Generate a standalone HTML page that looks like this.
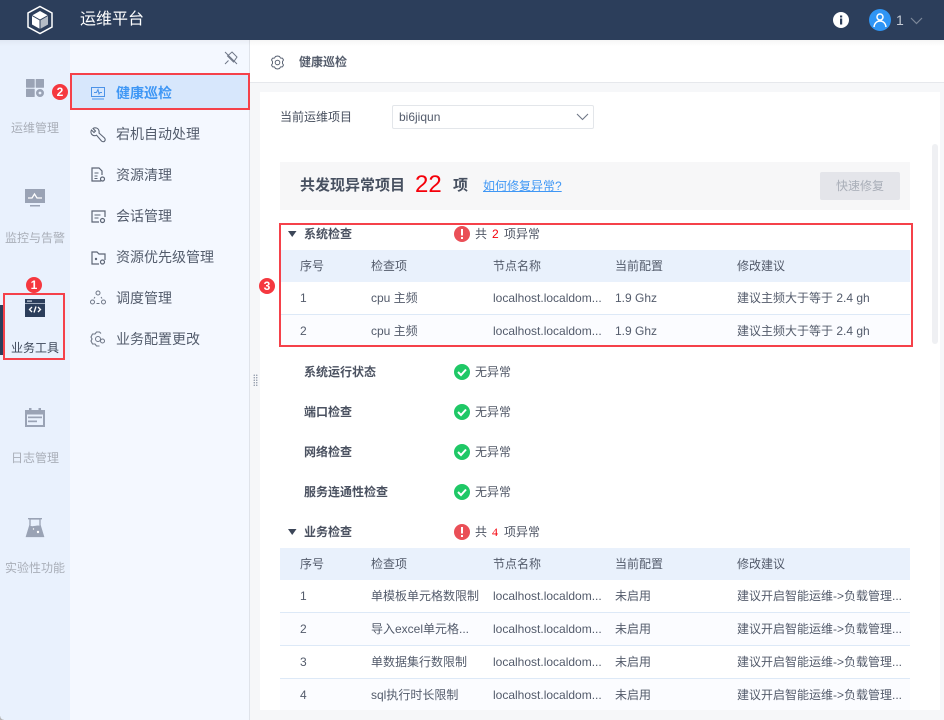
<!DOCTYPE html>
<html lang="zh"><head><meta charset="utf-8"><style>
*{box-sizing:border-box}
html,body{margin:0;padding:0;width:944px;height:720px;overflow:hidden;background:#f6f7f9;font-family:"Liberation Sans","Noto Sans CJK SC",sans-serif;font-size:12px;color:#4a5568}
.a{position:absolute;white-space:nowrap}
svg{position:absolute;overflow:visible}
.rl{left:0;width:70px;text-align:center;font-size:12px;color:#a9aeb8;line-height:16px}
.ml{left:116px;font-size:14px;color:#535c6c;line-height:20px}
.sec{left:304px;font-weight:bold;color:#4a5160;line-height:16px}
.st{left:475px;color:#4f5665;line-height:16px}
.th{height:32px;left:280px;width:630px;background:#e9f1fc}
.rw{left:280px;width:630px;height:33px;border-bottom:1px solid #dde9f7}
.t{line-height:16px;color:#535b6b}
.badge{width:16px;height:16px;border-radius:50%;background:#f5383f;color:#fff;text-align:center;font-size:12px;font-weight:bold;line-height:16px}
</style></head><body>
<div class="a" style="left:0;top:0;width:944px;height:40px;background:#2c3e5b"></div>
<svg style="left:27px;top:5px" width="26" height="30" viewBox="0 0 26 30"><path d="M13 1.500 25 8v14l-12 6.500L1 22V8z" fill="none" stroke="#fff" stroke-width="1.500"/><path d="M13 6 21 10.500v9L13 24l-8-4.500v-9z" fill="#fff"/><path d="M13 15v9l8-4.500v-9z" fill="#2c3e5b" opacity=".35"/><path d="M5 10.500 13 15l8-4.500M13 15v9" stroke="#2c3e5b" fill="none" stroke-width="1"/></svg>
<div class="a" style="left:80px;top:9px;font-size:16px;line-height:22px;color:#fff">运维平台</div>
<svg style="left:833px;top:12px" width="16" height="16"><circle cx="8" cy="8" r="8" fill="#fff"/><rect x="7" y="6.500" width="2.200" height="6" fill="#2c3e5b"/><rect x="7" y="3.500" width="2.200" height="2" fill="#2c3e5b"/></svg>
<svg style="left:869px;top:9px" width="22" height="22"><circle cx="11" cy="11" r="11" fill="#2f95f5"/><circle cx="11" cy="8" r="3" fill="none" stroke="#fff" stroke-width="1.500"/><path d="M5 18c.5-4 3-6 6-6s5.500 2 6 6" fill="none" stroke="#fff" stroke-width="1.500"/></svg>
<div class="a" style="left:896px;top:11px;font-size:14px;line-height:18px;color:#c5cbd5">1</div>
<svg style="left:910px;top:17px" width="13" height="8"><path d="M1 1l5.500 5.500L12 1" fill="none" stroke="#7c8799" stroke-width="1.200"/></svg>

<div class="a" style="left:0;top:40px;width:70px;height:680px;background:#e9f1fd"></div>
<div class="a" style="left:70px;top:40px;width:180px;height:680px;background:#f4f8ff;border-right:1px solid #dfe3ea"></div>
<div class="a" style="left:0;top:716px;width:4px;height:4px;background:radial-gradient(circle at 100% 0,#e9f1fd 3.500px,#b5b5b5 4px)"></div>
<div class="a" style="left:250px;top:40px;width:694px;height:42px;background:#fff"></div>
<div class="a" style="left:250px;top:82px;width:694px;height:1px;background:#e6e8ec"></div>
<div class="a" style="left:260px;top:92px;width:680px;height:628px;background:#fff"></div>
<div class="a" style="left:260px;top:710px;width:680px;height:10px;background:#f6f7f9"></div>
<div class="a" style="left:932px;top:144px;width:6px;height:200px;border-radius:3px;background:#eff0f3"></div>
<div class="a" style="left:0;top:40px;width:944px;height:6px;background:linear-gradient(#0000000a,#00000000)"></div>

<!-- rail -->
<svg style="left:26px;top:79px" width="18" height="18"><rect width="8.700" height="8.700" rx=".5" fill="#9aa3b5"/><rect x="9.700" width="8.300" height="8.700" rx=".5" fill="#9aa3b5"/><rect y="9.700" width="8.700" height="8.300" rx=".5" fill="#9aa3b5"/><circle cx="14" cy="14" r="2.700" fill="none" stroke="#9aa3b5" stroke-width="2.600"/></svg>
<div class="a rl" style="top:120px">运维管理</div>
<svg style="left:25px;top:189px" width="20" height="18"><rect width="20" height="14" fill="#9aa3b5"/><rect x="5" y="16" width="10" height="1.500" fill="#9aa3b5"/><path d="M3 9h4l2.500-4L12 9h5" fill="none" stroke="#fff" stroke-width="1.300"/></svg>
<div class="a rl" style="top:230px">监控与告警</div>
<div class="a" style="left:0;top:305px;width:3px;height:50px;background:#2c3e5b"></div>
<svg style="left:25px;top:299px" width="20" height="18"><rect width="20" height="18" fill="#2c3e5b"/><rect y="4" width="20" height=".7" fill="#cfd8e6"/><rect x="2" y="1.500" width="5" height="1.200" fill="#cfd8e6"/><path d="M7 8 4.500 10.500 7 13M13 8l2.500 2.500L13 13M11 7.500 9 13.500" fill="none" stroke="#fff" stroke-width="1.300"/></svg>
<div class="a rl" style="top:340px;color:#3c4658">业务工具</div>
<svg style="left:25px;top:408px" width="20" height="19"><path d="M0 2h20v17H0z" fill="#9aa3b5"/><rect x="4" width="2.500" height="4" fill="#9aa3b5"/><rect x="13.500" width="2.500" height="4" fill="#9aa3b5"/><rect x="2" y="6.500" width="16" height="10.500" fill="#e9f1fd"/><rect x="3" y="8.500" width="14" height="1.700" fill="#9aa3b5"/><rect x="3" y="12.500" width="9" height="1.700" fill="#9aa3b5"/></svg>
<div class="a rl" style="top:450px">日志管理</div>
<svg style="left:26px;top:518px" width="18" height="19"><path d="M2 .7h14M4 1v6L.5 18.500h17L14 7V1z" fill="none" stroke="#9aa3b5" stroke-width="1.300"/><path d="M3.500 7.500 0 19h18L14.500 8c-4-1.500-7 1.500-11-.5z" fill="#9aa3b5"/><circle cx="12" cy="14" r="1.200" fill="#fff"/><circle cx="7.500" cy="11" r=".7" fill="#fff"/></svg>
<div class="a rl" style="top:560px">实验性功能</div>

<!-- secondary menu -->
<svg style="left:224px;top:51px" width="14" height="14"><path d="M8 1 13 6 9.500 11 3.500 5zM1 1l12 12M1 13l3.500-3.500" fill="none" stroke="#6f7787" stroke-width="1"/></svg>
<div class="a" style="left:71px;top:75px;width:178px;height:34px;background:#d7e7fc"></div>
<svg style="left:91px;top:87px" width="14" height="13"><rect x=".5" y=".5" width="13" height="9" fill="none" stroke="#4c93e8"/><path d="M3 5.500h2.500l1.500-3 1 4.500 1-1.500h2" fill="none" stroke="#4c93e8"/><rect x="1" y="11.500" width="12" height="1" fill="#4c93e8"/></svg>
<div class="a ml" style="top:83px;color:#3f97f5;font-weight:bold">健康巡检</div>
<svg style="left:90px;top:127px" width="16" height="16"><path d="M6.500 1C4.500.5 3.500 1 3 1.500L5.500 4 4 5.500 1.500 3C.5 5 1 7 2.500 8 4 9 5.500 8.700 6.500 8.200L11.500 14c1 1 2.500 1 3.200 0 .8-1 .6-2-.2-3L9 6C9.500 4 8.500 1.500 6.500 1z" fill="none" stroke="#5d6676" stroke-width="1.100"/></svg>
<div class="a ml" style="top:124px">宕机自动处理</div>
<svg style="left:91px;top:167px" width="15" height="16"><path d="M10 14H1V1h7l3 3v4" fill="none" stroke="#5d6676" stroke-width="1.200"/><path d="M3.500 6h4M3.500 9h3M3.500 11.500h3" stroke="#5d6676"/><circle cx="11.500" cy="12" r="2" fill="none" stroke="#5d6676" stroke-width="1.200"/></svg>
<div class="a ml" style="top:165px">资源清理</div>
<svg style="left:91px;top:210px" width="15" height="14"><path d="M8 12H1V1h13v6" fill="none" stroke="#5d6676" stroke-width="1.200"/><path d="M3.500 5h6M3.500 8h4" stroke="#5d6676"/><circle cx="11.500" cy="10.500" r="2" fill="none" stroke="#5d6676" stroke-width="1.200"/></svg>
<div class="a ml" style="top:206px">会话管理</div>
<svg style="left:91px;top:251px" width="15" height="14"><path d="M8 13H1V1h5l2 2h6v6" fill="none" stroke="#5d6676" stroke-width="1.200"/><circle cx="5" cy="8" r="1.200" fill="#5d6676"/><circle cx="11.500" cy="11" r="2" fill="none" stroke="#5d6676" stroke-width="1.200"/></svg>
<div class="a ml" style="top:247px">资源优先级管理</div>
<svg style="left:90px;top:290px" width="16" height="15"><circle cx="8" cy="3" r="2" fill="none" stroke="#6f7787"/><circle cx="2.500" cy="12" r="2" fill="none" stroke="#6f7787"/><circle cx="13.500" cy="12" r="2" fill="none" stroke="#6f7787"/><path d="M6.500 13.500h3M5 7 4 8.500M11 7l1 1.500" stroke="#6f7787"/></svg>
<div class="a ml" style="top:288px">调度管理</div>
<svg style="left:90px;top:331px" width="16" height="16"><path d="M11 2.500 9.500 1h-3L5 3 2.500 3 1 6l1 2-1 2 1.500 3H5l1.500 2h3" fill="none" stroke="#6f7787" stroke-width="1.100"/><circle cx="8" cy="8" r="2.500" fill="none" stroke="#6f7787"/><circle cx="12.500" cy="10" r="2" fill="none" stroke="#6f7787"/></svg>
<div class="a ml" style="top:329px">业务配置更改</div>
<div class="a" style="left:253px;top:374px;width:5px;height:12px;background-image:radial-gradient(#8d96a6 .6px,transparent .8px);background-size:2.500px 2.500px"></div>

<!-- top bar -->
<svg style="left:270px;top:55px" width="15" height="15"><path d="M7.500 1 9.500 1.500 10.500 3l2 .2 1 1.800-1 1.500v2l1 1.500-1 1.800-2 .2-1 1.500-2 .5-2-.5-1-1.500-2-.2-1-1.800 1-1.500v-2l-1-1.500 1-1.800 2-.2 1-1.500z" fill="none" stroke="#5d6676" stroke-width="1"/><circle cx="7.500" cy="7.500" r="2.300" fill="none" stroke="#5d6676"/></svg>
<div class="a t" style="left:299px;top:54px;font-weight:bold;color:#555d6c">健康巡检</div>
<div class="a t" style="left:280px;top:109px;color:#474f5e">当前运维项目</div>
<div class="a" style="left:392px;top:105px;width:202px;height:24px;border:1px solid #e3e6ea;border-radius:2px;background:#fff"></div>
<div class="a t" style="left:399px;top:109px">bi6jiqun</div>
<svg style="left:576px;top:113px" width="13" height="8"><path d="M1 1l5.500 5.500L12 1" fill="none" stroke="#6f7787" stroke-width="1.100"/></svg>

<div class="a" style="left:280px;top:162px;width:630px;height:48px;background:#f7f7f8"></div>
<div class="a" style="left:300px;top:176px;font-size:15px;line-height:20px;font-weight:bold;color:#475060">共发现异常项目</div>
<div class="a" style="left:415px;top:170px;font-size:24px;line-height:30px;color:#f5000a">22</div>
<div class="a" style="left:453px;top:176px;font-size:15px;line-height:20px;font-weight:bold;color:#475060">项</div>
<div class="a" style="left:483px;top:178px;line-height:16px;color:#3f97f5;text-decoration:underline">如何修复异常?</div>
<div class="a" style="left:820px;top:172px;width:80px;height:28px;background:#e4e5ea;border-radius:2px;color:#a9aeb8;text-align:center;line-height:28px">快速修复</div>

<!-- section 1 -->
<svg style="left:288px;top:231px" width="9" height="7"><path d="M0 0h8.500L4.200 6z" fill="#3c4658"/></svg>
<div class="a sec" style="top:226px">系统检查</div>
<svg style="left:454px;top:226px" width="16" height="16"><circle cx="8" cy="8" r="8" fill="#ea4f57"/><rect x="7" y="3" width="2" height="6.500" fill="#fff"/><rect x="7" y="11" width="2" height="2" fill="#fff"/></svg>
<div class="a st" style="top:226px">共</div><div class="a st" style="left:492px;top:226px;color:#f5000a">2</div><div class="a st" style="left:504px;top:226px">项异常</div>
<div class="a th" style="top:250px"></div>
<div class="a t" style="left:300px;top:258px">序号</div><div class="a t" style="left:371px;top:258px">检查项</div><div class="a t" style="left:493px;top:258px">节点名称</div><div class="a t" style="left:615px;top:258px">当前配置</div><div class="a t" style="left:737px;top:258px">修改建议</div>
<div class="a rw" style="top:282px;background:#fff"></div>
<div class="a t" style="left:300px;top:290px">1</div><div class="a t" style="left:371px;top:290px">cpu 主频</div><div class="a t" style="left:493px;top:290px">localhost.localdom...</div><div class="a t" style="left:615px;top:290px">1.9 Ghz</div><div class="a t" style="left:737px;top:290px">建议主频大于等于 2.4 gh</div>
<div class="a" style="left:280px;top:315px;width:630px;height:31px;background:#fbfcff"></div>
<div class="a t" style="left:300px;top:323px">2</div><div class="a t" style="left:371px;top:323px">cpu 主频</div><div class="a t" style="left:493px;top:323px">localhost.localdom...</div><div class="a t" style="left:615px;top:323px">1.9 Ghz</div><div class="a t" style="left:737px;top:323px">建议主频大于等于 2.4 gh</div>

<!-- ok rows -->
<div class="a sec" style="top:364px">系统运行状态</div>
<svg style="left:454px;top:364px" width="16" height="16"><circle cx="8" cy="8" r="8" fill="#1fc866"/><path d="M4 8l3 3 5-5.500" fill="none" stroke="#fff" stroke-width="2"/></svg><div class="a st" style="top:364px">无异常</div>
<div class="a sec" style="top:404px">端口检查</div>
<svg style="left:454px;top:404px" width="16" height="16"><circle cx="8" cy="8" r="8" fill="#1fc866"/><path d="M4 8l3 3 5-5.500" fill="none" stroke="#fff" stroke-width="2"/></svg><div class="a st" style="top:404px">无异常</div>
<div class="a sec" style="top:444px">网络检查</div>
<svg style="left:454px;top:444px" width="16" height="16"><circle cx="8" cy="8" r="8" fill="#1fc866"/><path d="M4 8l3 3 5-5.500" fill="none" stroke="#fff" stroke-width="2"/></svg><div class="a st" style="top:444px">无异常</div>
<div class="a sec" style="top:484px">服务连通性检查</div>
<svg style="left:454px;top:484px" width="16" height="16"><circle cx="8" cy="8" r="8" fill="#1fc866"/><path d="M4 8l3 3 5-5.500" fill="none" stroke="#fff" stroke-width="2"/></svg><div class="a st" style="top:484px">无异常</div>

<!-- section 2 -->
<svg style="left:288px;top:529px" width="9" height="7"><path d="M0 0h8.500L4.200 6z" fill="#3c4658"/></svg>
<div class="a sec" style="top:524px">业务检查</div>
<svg style="left:454px;top:524px" width="16" height="16"><circle cx="8" cy="8" r="8" fill="#ea4f57"/><rect x="7" y="3" width="2" height="6.500" fill="#fff"/><rect x="7" y="11" width="2" height="2" fill="#fff"/></svg>
<div class="a st" style="top:524px">共</div><div class="a st" style="left:492px;top:524px;color:#f5000a;font-family:'Liberation Serif',serif">4</div><div class="a st" style="left:504px;top:524px">项异常</div>
<div class="a th" style="top:548px"></div>
<div class="a t" style="left:300px;top:556px">序号</div><div class="a t" style="left:371px;top:556px">检查项</div><div class="a t" style="left:493px;top:556px">节点名称</div><div class="a t" style="left:615px;top:556px">当前配置</div><div class="a t" style="left:737px;top:556px">修改建议</div>
<div class="a rw" style="top:580px"></div>
<div class="a t" style="left:300px;top:588px">1</div><div class="a t" style="left:371px;top:588px">单模板单元格数限制</div><div class="a t" style="left:493px;top:588px">localhost.localdom...</div><div class="a t" style="left:615px;top:588px">未启用</div><div class="a t" style="left:737px;top:588px">建议开启智能运维-&gt;负载管理...</div>
<div class="a rw" style="top:613px;background:#fbfcff"></div>
<div class="a t" style="left:300px;top:621px">2</div><div class="a t" style="left:371px;top:621px">导入excel单元格...</div><div class="a t" style="left:493px;top:621px">localhost.localdom...</div><div class="a t" style="left:615px;top:621px">未启用</div><div class="a t" style="left:737px;top:621px">建议开启智能运维-&gt;负载管理...</div>
<div class="a rw" style="top:646px"></div>
<div class="a t" style="left:300px;top:654px">3</div><div class="a t" style="left:371px;top:654px">单数据集行数限制</div><div class="a t" style="left:493px;top:654px">localhost.localdom...</div><div class="a t" style="left:615px;top:654px">未启用</div><div class="a t" style="left:737px;top:654px">建议开启智能运维-&gt;负载管理...</div>
<div class="a" style="left:280px;top:679px;width:630px;height:31px;background:#fbfcff"></div>
<div class="a t" style="left:300px;top:687px">4</div><div class="a t" style="left:371px;top:687px">sql执行时长限制</div><div class="a t" style="left:493px;top:687px">localhost.localdom...</div><div class="a t" style="left:615px;top:687px">未启用</div><div class="a t" style="left:737px;top:687px">建议开启智能运维-&gt;负载管理...</div>

<!-- annotations -->
<div class="a" style="left:70px;top:73px;width:180px;height:37px;border:2px solid #f5414a"></div>
<div class="a" style="left:3px;top:293px;width:62px;height:67px;border:2px solid #f5414a"></div>
<div class="a" style="left:279px;top:223px;width:634px;height:124px;border:2px solid #f5414a"></div>
<div class="a badge" style="left:26px;top:277px">1</div>
<div class="a badge" style="left:52px;top:84px">2</div>
<div class="a badge" style="left:259px;top:278px">3</div>
</body></html>
